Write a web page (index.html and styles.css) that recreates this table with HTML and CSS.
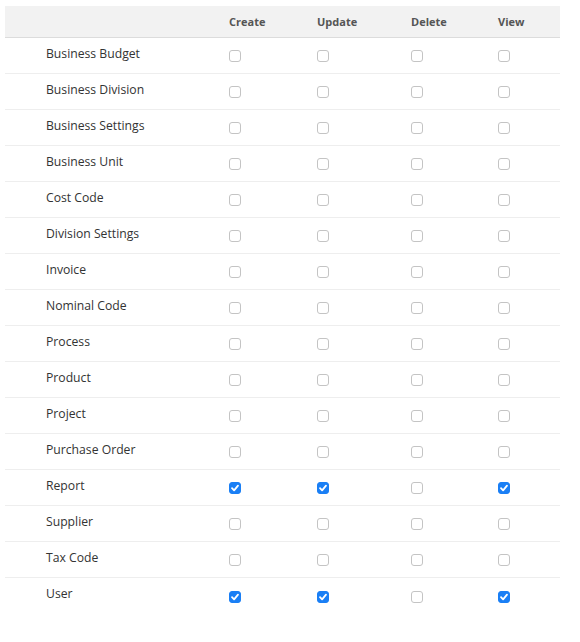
FILE: index.html
```html
<!DOCTYPE html>
<html>
<head>
<meta charset="utf-8">
<link rel="stylesheet" href="styles.css">
</head>
<body>
<div class="perm">
  <div class="row head">
    <div class="name"></div>
    <div>Create</div>
    <div>Update</div>
    <div>Delete</div>
    <div>View</div>
  </div>
  <div class="row"><div class="name">Business Budget</div><div><span class="cb"></span></div><div><span class="cb"></span></div><div><span class="cb"></span></div><div><span class="cb"></span></div></div>
  <div class="row"><div class="name">Business Division</div><div><span class="cb"></span></div><div><span class="cb"></span></div><div><span class="cb"></span></div><div><span class="cb"></span></div></div>
  <div class="row"><div class="name">Business Settings</div><div><span class="cb"></span></div><div><span class="cb"></span></div><div><span class="cb"></span></div><div><span class="cb"></span></div></div>
  <div class="row"><div class="name">Business Unit</div><div><span class="cb"></span></div><div><span class="cb"></span></div><div><span class="cb"></span></div><div><span class="cb"></span></div></div>
  <div class="row"><div class="name">Cost Code</div><div><span class="cb"></span></div><div><span class="cb"></span></div><div><span class="cb"></span></div><div><span class="cb"></span></div></div>
  <div class="row"><div class="name">Division Settings</div><div><span class="cb"></span></div><div><span class="cb"></span></div><div><span class="cb"></span></div><div><span class="cb"></span></div></div>
  <div class="row"><div class="name">Invoice</div><div><span class="cb"></span></div><div><span class="cb"></span></div><div><span class="cb"></span></div><div><span class="cb"></span></div></div>
  <div class="row"><div class="name">Nominal Code</div><div><span class="cb"></span></div><div><span class="cb"></span></div><div><span class="cb"></span></div><div><span class="cb"></span></div></div>
  <div class="row"><div class="name">Process</div><div><span class="cb"></span></div><div><span class="cb"></span></div><div><span class="cb"></span></div><div><span class="cb"></span></div></div>
  <div class="row"><div class="name">Product</div><div><span class="cb"></span></div><div><span class="cb"></span></div><div><span class="cb"></span></div><div><span class="cb"></span></div></div>
  <div class="row"><div class="name">Project</div><div><span class="cb"></span></div><div><span class="cb"></span></div><div><span class="cb"></span></div><div><span class="cb"></span></div></div>
  <div class="row"><div class="name">Purchase Order</div><div><span class="cb"></span></div><div><span class="cb"></span></div><div><span class="cb"></span></div><div><span class="cb"></span></div></div>
  <div class="row"><div class="name">Report</div><div><span class="cb on"><svg viewBox="0 0 12 12"><path d="M3 6.2 L5.1 8.4 L9 3.6" /></svg></span></div><div><span class="cb on"><svg viewBox="0 0 12 12"><path d="M3 6.2 L5.1 8.4 L9 3.6" /></svg></span></div><div><span class="cb"></span></div><div><span class="cb on"><svg viewBox="0 0 12 12"><path d="M3 6.2 L5.1 8.4 L9 3.6" /></svg></span></div></div>
  <div class="row"><div class="name">Supplier</div><div><span class="cb"></span></div><div><span class="cb"></span></div><div><span class="cb"></span></div><div><span class="cb"></span></div></div>
  <div class="row"><div class="name">Tax Code</div><div><span class="cb"></span></div><div><span class="cb"></span></div><div><span class="cb"></span></div><div><span class="cb"></span></div></div>
  <div class="row last"><div class="name">User</div><div><span class="cb on"><svg viewBox="0 0 12 12"><path d="M3 6.2 L5.1 8.4 L9 3.6" /></svg></span></div><div><span class="cb on"><svg viewBox="0 0 12 12"><path d="M3 6.2 L5.1 8.4 L9 3.6" /></svg></span></div><div><span class="cb"></span></div><div><span class="cb on"><svg viewBox="0 0 12 12"><path d="M3 6.2 L5.1 8.4 L9 3.6" /></svg></span></div></div>
</div>
</body>
</html>
```
FILE: styles.css
```css
html, body {
  margin: 0;
  padding: 0;
  background: #fff;
}
body {
  padding: 6px 20px 0 5px;
  font-family: "Open Sans", "Liberation Sans", sans-serif;
  color: #333;
}
.perm {
  width: 555px;
}
.row {
  display: grid;
  grid-template-columns: 224px 88px 94px 87px 62px;
  height: 36px;
  align-items: center;
  border-bottom: 1px solid #eeeeee;
  box-sizing: border-box;
  font-size: 12.2px;
}
.row.last {
  border-bottom: none;
}
.row.head {
  height: 32px;
  background: #f2f2f2;
  border-bottom: 1px solid #dcdcdc;
  font-size: 11px;
  font-weight: 700;
  color: #555;
  padding-bottom: 1px;
}
.name {
  padding-left: 41px;
  padding-bottom: 5px;
}
.row.last .name {
  padding-bottom: 6px;
}
.head .name {
  padding-bottom: 0;
}
.cb {
  display: block;
  width: 12px;
  height: 12px;
  box-sizing: border-box;
  border: 1px solid #c4c4c4;
  border-radius: 3px;
  background: #fff;
  margin-top: 1px;
}
.cb.on {
  background: #1a7ff5;
  border-color: #1a7ff5;
  position: relative;
}
.cb svg {
  position: absolute;
  left: -1px;
  top: -1px;
  width: 12px;
  height: 12px;
}
.cb path {
  fill: none;
  stroke: #fff;
  stroke-width: 1.8;
  stroke-linecap: round;
  stroke-linejoin: round;
}
```
